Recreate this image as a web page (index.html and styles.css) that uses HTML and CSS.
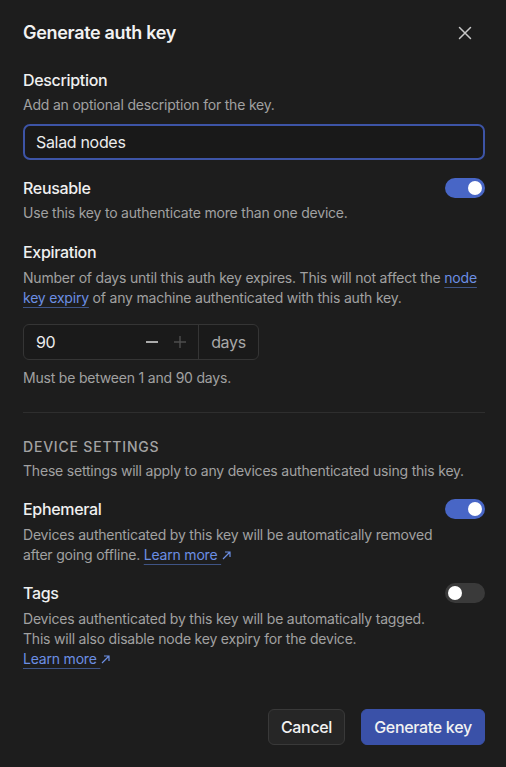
FILE: index.html
```html
<!DOCTYPE html>
<html lang="en">
<head>
<meta charset="utf-8">
<title>Generate auth key</title>
<link rel="stylesheet" href="styles.css">
</head>
<body>
<div class="dialog">
  <header class="head">
    <h1 class="title">Generate auth key</h1>
    <button class="close" aria-label="Close">
      <svg width="14" height="14" viewBox="0 0 14 14"><path d="M1.5 1.5 L12.5 12.5 M12.5 1.5 L1.5 12.5" stroke="#c8c8c8" stroke-width="1.5" stroke-linecap="round" fill="none"/></svg>
    </button>
  </header>

  <section class="field f-desc">
    <div class="label">Description</div>
    <p class="help">Add an optional description for the key.</p>
    <div class="text-input">Salad nodes</div>
  </section>

  <section class="field f-reuse">
    <div class="row">
      <div class="label">Reusable</div>
      <span class="toggle on"><span class="knob"></span></span>
    </div>
    <p class="help">Use this key to authenticate more than one device.</p>
  </section>

  <section class="field f-exp">
    <div class="label">Expiration</div>
    <p class="help">Number of days until this auth key expires. This will not affect the <a class="link" href="#">node key expiry</a> of any machine authenticated with this auth key.</p>
    <div class="number">
      <div class="num-main">
        <span class="num-val">90</span>
        <span class="step minus"><svg width="14" height="14" viewBox="0 0 14 14"><path d="M1 7 H13" stroke="#d0d0d0" stroke-width="1.6"/></svg></span>
        <span class="step plus"><svg width="14" height="14" viewBox="0 0 14 14"><path d="M1 7 H13 M7 1 V13" stroke="#4e4e4e" stroke-width="1.4"/></svg></span>
      </div>
      <div class="num-unit">days</div>
    </div>
    <p class="help hint">Must be between 1 and 90 days.</p>
  </section>

  <hr class="divider">

  <section class="field f-dev">
    <div class="section-title">DEVICE SETTINGS</div>
    <p class="help">These settings will apply to any devices authenticated using this key.</p>
  </section>

  <section class="field f-eph">
    <div class="row">
      <div class="label">Ephemeral</div>
      <span class="toggle on"><span class="knob"></span></span>
    </div>
    <p class="help narrow">Devices authenticated by this key will be automatically removed after going offline. <a class="link" href="#">Learn more <svg class="ext" width="9" height="9" viewBox="0 0 9 9"><path d="M1 8 L8 1 M3 1 H8 V6" stroke="currentColor" stroke-width="1.2" fill="none"/></svg></a></p>
  </section>

  <section class="field f-tags">
    <div class="row">
      <div class="label">Tags</div>
      <span class="toggle"><span class="knob"></span></span>
    </div>
    <p class="help narrow">Devices authenticated by this key will be automatically tagged. This will also disable node key expiry for the device.<br><a class="link" href="#">Learn more <svg class="ext" width="9" height="9" viewBox="0 0 9 9"><path d="M1 8 L8 1 M3 1 H8 V6" stroke="currentColor" stroke-width="1.2" fill="none"/></svg></a></p>
  </section>

  <footer class="actions">
    <button class="btn secondary">Cancel</button>
    <button class="btn primary">Generate key</button>
  </footer>
</div>
</body>
</html>
```

FILE: styles.css
```css
* { box-sizing: border-box; }
html, body { margin: 0; padding: 0; }
body {
  background: #1d1d1d;
  font-family: Inter, "Noto Sans", "Liberation Sans", sans-serif;
  color: #ececec;
  width: 506px;
  height: 767px;
  overflow: hidden;
  letter-spacing: -0.02em;
}
.dialog {
  padding: 19px 21px 0 23px;
  display: flex;
  flex-direction: column;
}
.head {
  display: flex;
  align-items: center;
  justify-content: space-between;
  height: 28px;
}
.title {
  margin: 0;
  font-size: 18px;
  line-height: 28px;
  font-weight: 600;
  color: #f2f2f2;
}
.close {
  background: none;
  border: 0;
  padding: 0;
  width: 24px;
  height: 24px;
  display: flex;
  align-items: center;
  justify-content: center;
  margin-right: 8px;
}
.field { display: flex; flex-direction: column; }
.label {
  font-size: 16px;
  line-height: 24px;
  font-weight: 500;
  color: #f0f0f0;
}
.help {
  margin: 3px 0 0;
  font-size: 14px;
  line-height: 20px;
  letter-spacing: -0.2px;
  color: #a1a1a1;
}
.help.narrow { max-width: 418px; }
.row {
  display: flex;
  align-items: center;
  justify-content: space-between;
}
.link {
  color: #6c8fe4;
  text-decoration: underline;
  text-decoration-color: #3f5485;
  text-underline-offset: 4px;
  text-decoration-thickness: 1px;
}
.ext { vertical-align: 0px; margin-left: 1px; }

.f-desc { margin-top: 21px; }
.text-input {
  margin-top: 9px;
  height: 36px;
  border: 2px solid #3d54a6;
  border-radius: 7px;
  background: #191919;
  padding: 0 11px;
  display: flex;
  align-items: center;
  font-size: 16px;
  color: #ececec;
}

.f-reuse { margin-top: 16px; }
.toggle {
  width: 40px;
  height: 20px;
  border-radius: 10px;
  background: #3a3a3a;
  display: flex;
  align-items: center;
  padding: 0 3px;
}
.toggle.on { background: #4866c6; justify-content: flex-end; }
.knob {
  width: 14px;
  height: 14px;
  border-radius: 50%;
  background: #ffffff;
}

.f-exp { margin-top: 17px; }
.f-exp .help { margin-top: 4px; }
.number {
  margin-top: 16px;
  width: 236px;
  height: 36px;
  display: flex;
  border: 1px solid #353535;
  border-radius: 6px;
  background: #1a1a1a;
}
.num-main {
  flex: 0 0 175px;
  display: flex;
  align-items: center;
  padding-left: 12px;
  border-right: 1px solid #353535;
  font-size: 16px;
  color: #ececec;
}
.num-val { flex: 1; }
.step { display: flex; width: 28px; justify-content: center; }
.step.plus { margin-right: 4px; }
.num-unit {
  flex: 1;
  display: flex;
  align-items: center;
  justify-content: center;
  font-size: 16px;
  color: #a8a8a8;
}
.f-exp .help.hint { margin-top: 8px; }

.divider {
  border: 0;
  border-top: 1px solid #2e2e2e;
  margin: 24px 0 0;
  height: 0;
}

.f-dev { margin-top: 24px; }
.section-title {
  font-size: 14px;
  line-height: 20px;
  letter-spacing: 0.8px;
  color: #a3a3a3;
  font-weight: 500;
}
.f-dev .help { margin-top: 4px; }

.f-eph { margin-top: 16px; }
.f-eph .help { margin-top: 4px; }
.f-tags { margin-top: 16px; }
.f-tags .help { margin-top: 4px; }

.actions {
  margin-top: 40px;
  display: flex;
  justify-content: flex-end;
  gap: 16px;
}
.btn {
  height: 36px;
  border-radius: 6px;
  font-family: inherit;
  font-size: 16px;
  font-weight: 500;
  letter-spacing: -0.02em;
  padding: 0 14px;
  color: #f2f2f2;
}
.btn.secondary {
  background: #262626;
  border: 1px solid #393939;
  width: 77px;
  padding: 0;
}
.btn.primary {
  background: #3a51a8;
  border: 1px solid #3a51a8;
  width: 124px;
  padding: 0;
}
```
